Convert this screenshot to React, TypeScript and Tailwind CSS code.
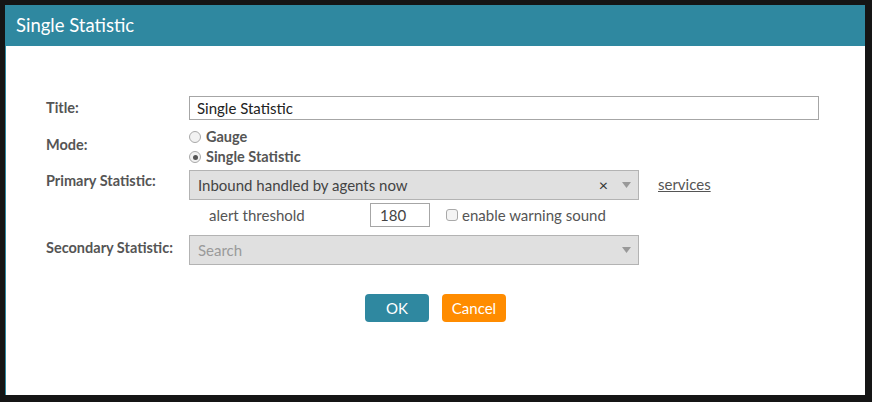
const font = { fontFamily: 'Lato, "Noto Sans", "Liberation Sans", sans-serif' };

function Radio({ checked, label }: { checked?: boolean; label: string }) {
  return (
    <label className="flex items-center h-[20px] gap-[5px] text-[14.5px] font-bold text-[#555]">
      <span className="w-[12px] h-[12px] rounded-full border border-[#a9a9a9] bg-[#f2f2f2] flex items-center justify-center">
        {checked ? <span className="w-[5px] h-[5px] rounded-full bg-[#555]" /> : null}
      </span>
      {label}
    </label>
  );
}

function Select({ value, placeholder, clearable }: { value?: string; placeholder?: string; clearable?: boolean }) {
  return (
    <div className="w-[450px] h-[30px] bg-[#e0e0e0] border border-[#b3b3b3] flex items-center pl-[8px] pr-[6px] text-[15px]">
      <span className={value ? 'flex-1 text-[#444]' : 'flex-1 text-[#9a9a9a]'}>{value ?? placeholder}</span>
      {clearable ? <span className="text-[#333] text-[16px] mr-[14px] leading-none">×</span> : null}
      <svg width="9" height="6" viewBox="0 0 9 6" className="mr-[1px]">
        <path d="M0 0h9L4.5 6z" fill="#999" />
      </svg>
    </div>
  );
}

export default function App() {
  return (
    <div className="w-[872px] h-[402px] bg-[#151515] pt-[5px] pl-[5px]" style={font}>
      <div className="w-[860px] h-[390px] bg-white border-l border-[#2e88a0] flex flex-col">
        <div className="h-[41px] bg-[#2f88a0] flex items-center pl-[10px] text-white text-[18.5px]">
          Single Statistic
        </div>

        <div className="flex flex-col pl-[40px] pt-[50px]">
          <div className="flex items-center">
            <div className="w-[143px] text-[14.5px] font-bold text-[#555]">Title:</div>
            <input
              readOnly
              value="Single Statistic"
              className="w-[630px] h-[24px] border border-[#a6a6a6] px-[7px] text-[15px] text-[#222] outline-none"
            />
          </div>

          <div className="flex mt-[7px]">
            <div className="w-[143px] pt-[7px] text-[14.5px] font-bold text-[#555]">Mode:</div>
            <div className="flex flex-col">
              <Radio label="Gauge" />
              <Radio checked label="Single Statistic" />
            </div>
          </div>

          <div className="flex mt-[3px]">
            <div className="w-[143px] text-[14.5px] font-bold text-[#555]">Primary Statistic:</div>
            <Select value="Inbound handled by agents now" clearable />
            <a className="ml-[19px] pt-[3px] text-[15px] text-[#555] underline">services</a>
          </div>

          <div className="flex items-center mt-[3px] h-[24px] text-[15px] text-[#555]">
            <div className="w-[163px]" />
            <div className="w-[161px]">alert threshold</div>
            <input
              readOnly
              value="180"
              className="w-[60px] h-[24px] border border-[#a6a6a6] px-[9px] text-[15px] text-[#444] outline-none"
            />
            <span className="ml-[16px] w-[12px] h-[12px] rounded-[3px] border border-[#a9a9a9] bg-[#f4f4f4]" />
            <span className="ml-[4px]">enable warning sound</span>
          </div>

          <div className="flex items-center mt-[8px]">
            <div className="w-[143px] pb-[4px] text-[14.5px] font-bold text-[#555]">Secondary Statistic:</div>
            <Select placeholder="Search" />
          </div>
        </div>

        <div className="flex justify-center gap-[13px] mt-[29px]">
          <button className="w-[64px] h-[28px] rounded-[4px] bg-[#2f88a0] text-white text-[15px]">OK</button>
          <button className="w-[64px] h-[28px] rounded-[4px] bg-[#ff8c00] text-white text-[15px]">Cancel</button>
        </div>
      </div>
    </div>
  );
}
